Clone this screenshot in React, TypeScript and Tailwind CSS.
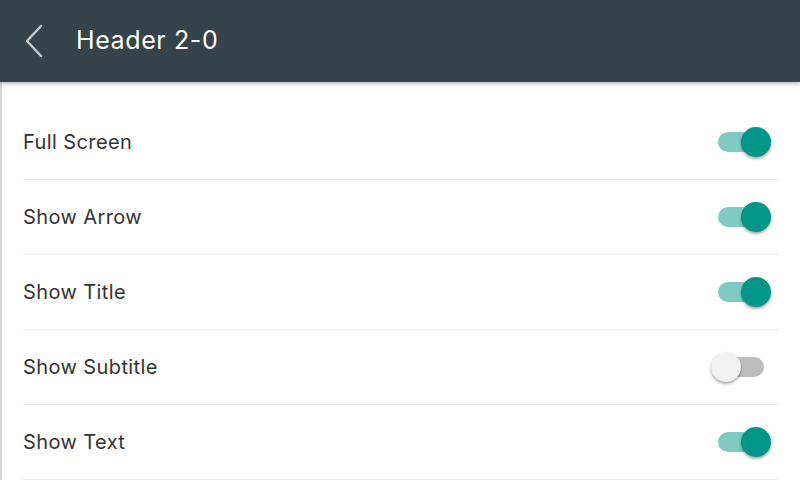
import React, { useState } from 'react';

const rows = [
    { label: 'Full Screen', on: true },
    { label: 'Show Arrow', on: true },
    { label: 'Show Title', on: true },
    { label: 'Show Subtitle', on: false },
    { label: 'Show Text', on: true },
];

const Toggle = ({ on, onClick }: { on: boolean; onClick: () => void }) => (
    <button onClick={onClick} className="relative w-[60px] h-[30px] flex items-center">
        <span className={`ml-[7px] w-[46px] h-[20px] rounded-full ${on ? 'bg-[#7fcbc3]' : 'bg-[#bdbdbd]'}`} />
        <span
            className={`absolute top-0 w-[30px] h-[30px] rounded-full shadow-[0_2px_3px_rgba(0,0,0,0.35)] ${
                on ? 'left-[30px] bg-[#009688]' : 'left-0 bg-[#f1f1f1]'
            }`}
        />
    </button>
);

const App = () => {
    const [items, setItems] = useState(rows);

    const toggle = (i: number) => {
        setItems(items.map((it, idx) => (idx === i ? { ...it, on: !it.on } : it)));
    };

    return (
        <div className="w-[800px] h-[480px] overflow-hidden bg-white flex flex-col font-['Inter',sans-serif]">
            <header className="h-[82px] shrink-0 bg-[#35444b] flex items-center shadow-[0_2px_4px_rgba(0,0,0,0.25)] relative z-10">
                <button className="w-[76px] h-full flex items-center justify-center pr-[8px]">
                    <svg width="20" height="34" viewBox="0 0 20 34" fill="none">
                        <path d="M17 2 L3 17 L17 32" stroke="#c4c9cb" strokeWidth="2.5" strokeLinecap="round" strokeLinejoin="round" />
                    </svg>
                </button>
                <h1 className="text-[25px] text-white font-normal tracking-[0.6px]">Header 2-0</h1>
            </header>
            <div className="flex-1 border-l-2 border-[#d6d6d6]">
                <ul className="pt-[23px] pl-[21px] pr-[22px]">
                    {items.map((it, i) => (
                        <li key={it.label} className="h-[75px] flex items-center justify-between border-b border-[#ececec]">
                            <span className="text-[20px] text-[#333] tracking-[0.4px]">{it.label}</span>
                            <div className="mr-[7px]">
                                <Toggle on={it.on} onClick={() => toggle(i)} />
                            </div>
                        </li>
                    ))}
                </ul>
            </div>
        </div>
    );
};

export default App;
